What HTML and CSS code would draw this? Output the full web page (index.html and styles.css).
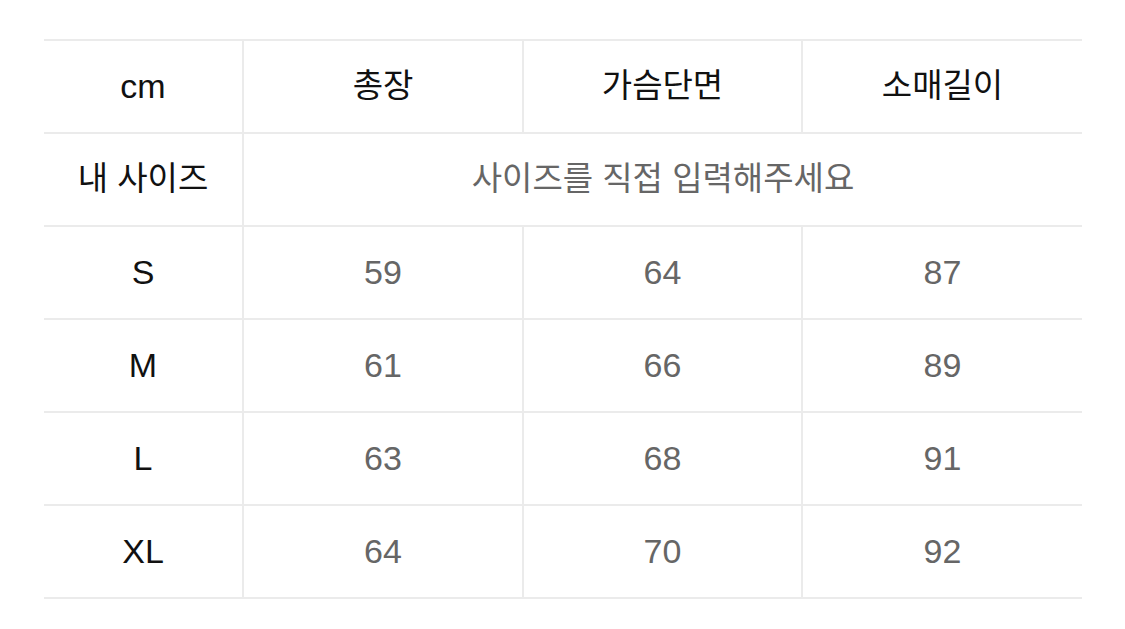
FILE: index.html
```html
<!DOCTYPE html>
<html lang="ko">
<head>
<meta charset="utf-8">
<link rel="stylesheet" href="styles.css">
</head>
<body>
<div class="wrap">
<table class="size">
  <colgroup>
    <col class="c0"><col class="c1"><col class="c2"><col class="c3">
  </colgroup>
  <thead>
    <tr><th>cm</th><th class="ko">총장</th><th class="ko">가슴단면</th><th class="ko">소매길이</th></tr>
  </thead>
  <tbody>
    <tr><th class="ko">내 사이즈</th><td class="ko" colspan="3">사이즈를 직접 입력해주세요</td></tr>
    <tr><th>S</th><td>59</td><td>64</td><td>87</td></tr>
    <tr><th>M</th><td>61</td><td>66</td><td>89</td></tr>
    <tr><th>L</th><td>63</td><td>68</td><td>91</td></tr>
    <tr><th>XL</th><td>64</td><td>70</td><td>92</td></tr>
  </tbody>
</table>
</div>
</body>
</html>
```

FILE: styles.css
```css
html, body {
  margin: 0;
  padding: 0;
  background: #ffffff;
}
.wrap {
  padding: 39px 43px 0 44px;
}
.size {
  width: 1038px;
  border-collapse: collapse;
  table-layout: fixed;
  font-family: "Liberation Sans", "Noto Sans CJK KR", sans-serif;
  font-size: 34px;
  line-height: 1;
}
.c0 { width: 199px; }
.c1 { width: 280px; }
.c2 { width: 279px; }
.c3 { width: 280px; }
.size th, .size td {
  height: 89px;
  padding: 0 0 2px 0;
  text-align: center;
  vertical-align: middle;
  border-top: 2px solid #ebebeb;
  border-bottom: 2px solid #ebebeb;
  border-left: 2px solid #ebebeb;
}
.size tr > :first-child {
  border-left: none;
}
.size .ko {
  font-size: 33px;
}
.size th {
  font-weight: normal;
  color: #111111;
}
.size td {
  color: #666666;
}
```
